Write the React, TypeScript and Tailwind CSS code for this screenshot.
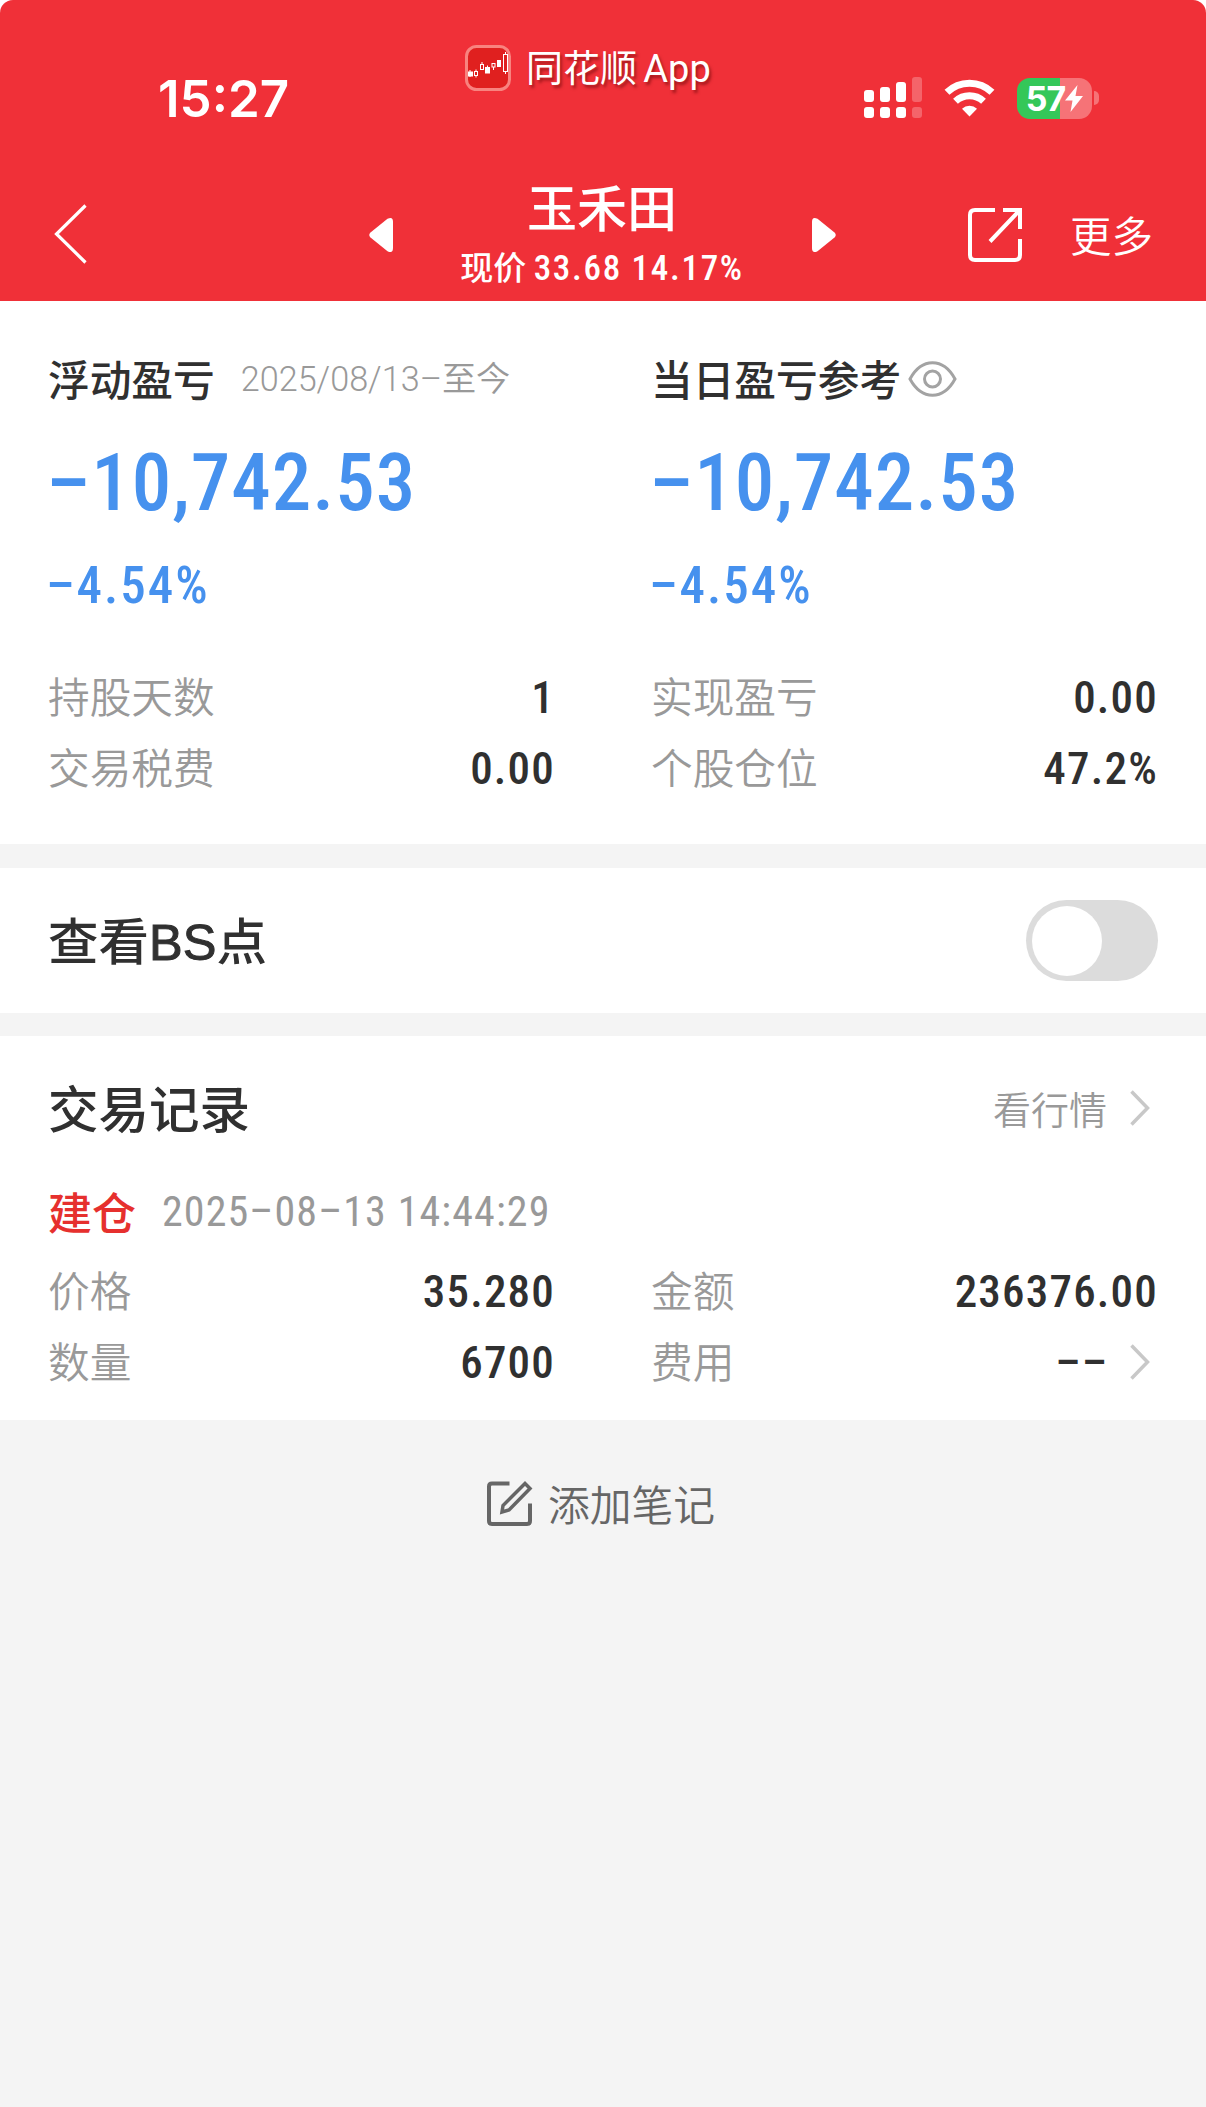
import type { ReactNode } from "react"

const DATE = "2025-08-13 14:44:29"

function ChevronRight() {
  return (
    <svg width="20" height="36" viewBox="0 0 20 36" fill="none" className="shrink-0">
      <path d="M1.5 1.5L17.5 18L1.5 34.5" stroke="#c8c8c8" strokeWidth="3.5" />
    </svg>
  )
}

function AppBadge() {
  return (
    <svg width="46" height="46" viewBox="0 0 46 46" fill="none">
      <rect x="1.5" y="1.5" width="43" height="43" rx="10" fill="#e0201f" stroke="#f8837f" strokeWidth="3" />
      <g fill="#fff" stroke="#fff" strokeWidth="1">
        <path d="M5 25v7" />
        <rect x="3.500" y="27" width="4" height="4" />
        <rect x="20.500" y="22.500" width="4" height="5.500" />
        <path d="M22.500 20.500v2" />
        <rect x="32.500" y="15.500" width="3" height="6" />
      </g>
      <g stroke="#fff" strokeWidth="1">
        <rect x="9.500" y="26.500" width="3" height="4" />
        <path d="M11 24.500v2M11 30.500v2" />
        <rect x="15.500" y="19.500" width="3" height="5" />
        <path d="M17 17v2.500" />
        <rect x="27" y="18.500" width="3" height="3.500" />
        <path d="M28.500 22v3" />
        <rect x="38.500" y="9.500" width="4" height="17" />
        <path d="M40.500 7v2.500M40.500 26.500v2.500" />
      </g>
    </svg>
  )
}

function Signal() {
  return (
    <svg width="58" height="42" viewBox="0 0 58 42" fill="#fff">
      <rect x="0" y="13" width="10" height="12" rx="3" />
      <rect x="16" y="10" width="10" height="15" rx="3" />
      <rect x="32" y="5" width="10" height="20" rx="3" />
      <rect x="48" y="0" width="10" height="25" rx="3" opacity="0.25" />
      <rect x="0" y="30" width="10" height="11" rx="3" />
      <rect x="16" y="30" width="10" height="11" rx="3" />
      <rect x="32" y="30" width="10" height="11" rx="3" />
      <rect x="48" y="30" width="10" height="11" rx="3" opacity="0.25" />
    </svg>
  )
}

function Wifi() {
  return (
    <svg width="51" height="38" viewBox="0 0 51 38" fill="none">
      <path d="M3 13.200A32.500 32.500 0 0 1 48 13.200" stroke="#fff" strokeWidth="7" />
      <path d="M11.500 22.300A20.500 20.500 0 0 1 39.500 22.300" stroke="#fff" strokeWidth="7" />
      <path d="M25.500 37.500L18 29.800A10.800 10.800 0 0 1 33 29.800Z" fill="#fff" />
    </svg>
  )
}

function Battery() {
  return (
    <div className="flex items-center gap-[2px]">
      <div className="flex h-[41px] w-[75px] items-center justify-center overflow-hidden rounded-[13px] bg-linear-to-r from-[#34c759] from-57% to-[#f67377] to-57%">
        <span className="font-['Inter',sans-serif] text-[34px] leading-[41px] font-bold tracking-[-1px] text-white">57</span>
        <svg width="18" height="27" viewBox="0 0 18 27" fill="#fff">
          <path d="M12.500 0L0 15.500H7.500L5.500 27L18 11H10.500Z" />
        </svg>
      </div>
      <div className="h-[14px] w-[5px] rounded-r-full bg-[#f67377]" />
    </div>
  )
}

function StatRow({ label, children }: { label: string; children: ReactNode }) {
  return (
    <div className="flex h-[71px] items-center justify-between">
      <span className="text-[41.700px] font-[350] text-[#999]">{label}</span>
      <span className="mt-[3px] flex items-center font-['Roboto',sans-serif] text-[45px] font-medium tracking-[1.200px] text-[#303030] [font-stretch:85%]">
        {children}
      </span>
    </div>
  )
}

function Profit({ title, extra }: { title: string; extra: ReactNode }) {
  return (
    <div>
      <div className="flex h-[60px] items-center">
        <h2 className="text-[41.700px] font-medium text-[#303030]">{title}</h2>
        {extra}
      </div>
      <p className="mt-[31px] -ml-[2px] h-[86px] font-['Roboto',sans-serif] text-[79px] leading-[86px] font-medium tracking-[1px] text-[#4691ee] [font-stretch:85%]">
        –10,742.53
      </p>
      <p className="mt-[30px] -ml-[2px] h-[60px] font-['Roboto',sans-serif] text-[51px] leading-[60px] font-medium tracking-[2px] text-[#4691ee] [font-stretch:85%]">
        –4.54%
      </p>
    </div>
  )
}

export default function App() {
  return (
    <div className="min-h-[2107px] w-[1206px] bg-[#f4f4f4] font-['Noto_Sans_CJK_SC',sans-serif] leading-none">
      <div className="bg-white">
        <header className="h-[301px] rounded-t-[13px] bg-[#f03038] text-white">
          {/* Status bar */}
          <div className="flex h-[140px] items-start pr-[107px] pl-[158px]">
            <div className="mt-[73px] w-[307px] font-['Inter',sans-serif] text-[51px] leading-[51px] font-semibold">15:27</div>
            <div className="mt-[44px] flex h-[47px] items-center gap-[15px]">
              <AppBadge />
              <span className="text-[37px] text-shadow-[2px_3px_3px_rgba(90,0,0,0.500)]">
                同花顺 <span className="-ml-[2px] font-['Roboto',sans-serif] text-[38px]">App</span>
              </span>
            </div>
            <div className="mt-[77px] ml-auto flex h-[42px] items-center gap-[22px]">
              <Signal />
              <Wifi />
              <Battery />
            </div>
          </div>

          {/* Navigation */}
          <div className="flex h-[161px] items-center pr-[53px] pl-[54px]">
            <svg width="34" height="60" viewBox="0 0 34 60" fill="none" className="mt-[26px]">
              <path d="M31.500 1.500L2.500 30L31.500 58.500" stroke="#fff" strokeWidth="3.200" />
            </svg>
            <svg width="26" height="36" viewBox="0 0 26 36" fill="#fff" className="mt-[29px] ml-[280px]">
              <path d="M19.500 1.800Q25 -1 25 5V31Q25 37 19.500 34.200L2.500 20.500Q0 18 2.500 15.500Z" />
            </svg>
            <div className="mt-[26px] ml-[66px] flex w-[284px] flex-col items-center">
              <h1 className="h-[64px] text-[50px] leading-[62px] font-medium">玉禾田</h1>
              <p className="h-[56px] text-[33px] leading-[56px] font-medium whitespace-nowrap">
                现价{" "}
                <span className="font-['Roboto',sans-serif] text-[35px] tracking-[1.700px] [font-stretch:85%]">
                  33.68 14.17%
                </span>
              </p>
            </div>
            <svg width="26" height="36" viewBox="0 0 26 36" fill="#fff" className="mt-[29px] ml-[67px]">
              <path d="M6.500 1.800Q1 -1 1 5V31Q1 37 6.500 34.200L23.500 20.500Q26 18 23.500 15.500Z" />
            </svg>
            <svg width="56" height="56" viewBox="0 0 56 56" fill="none" stroke="#fff" strokeWidth="4" className="mt-[29px] ml-[130px]">
              <path d="M28 3H8Q3 3 3 8V48Q3 53 8 53H48Q53 53 53 48V32" />
              <path d="M36 3H53V22M52 4L23 34.500" />
            </svg>
            <span className="mt-[29px] ml-auto text-[41.500px] font-[350]">更多</span>
          </div>
        </header>

        <section className="h-[543px] px-[48px] pt-[48px]">
          <div className="grid grid-cols-2 gap-x-[96px]">
            <Profit
              title="浮动盈亏"
              extra={
                <span className="ml-[26px] font-['Roboto','Noto_Sans_CJK_SC',sans-serif] text-[34.200px] font-[350] whitespace-nowrap text-[#999]">
                  2025/08/13–至今
                </span>
              }
            />
            <Profit
              title="当日盈亏参考"
              extra={
                <svg width="49" height="36" viewBox="0 0 49 36" fill="none" stroke="#a3a3a3" strokeWidth="3" className="ml-[7px]">
                  <path d="M2 18C8 7 16 1.800 24.500 1.800S41 7 47 18C41 29 33 34.200 24.500 34.200S8 29 2 18Z" />
                  <circle cx="24.500" cy="18" r="8" />
                </svg>
              }
            />
            <div className="mt-[44px]">
              <StatRow label="持股天数">1</StatRow>
              <StatRow label="交易税费">0.00</StatRow>
            </div>
            <div className="mt-[44px]">
              <StatRow label="实现盈亏">0.00</StatRow>
              <StatRow label="个股仓位">47.2%</StatRow>
            </div>
          </div>
        </section>
      </div>

      <section className="mt-[24px] flex h-[145px] items-center justify-between bg-white px-[48px]">
        <h2 className="text-[50.500px] font-medium text-[#303030]">
          查看<span className="font-['Liberation_Sans',sans-serif] [-webkit-text-stroke:1px_#303030]">BS</span>点
        </h2>
        <button className="flex h-[81px] w-[132px] items-center rounded-full bg-[#dcdcdc] px-[6px]">
          <span className="size-[70px] rounded-full bg-white" />
        </button>
      </section>

      <section className="mt-[23px] h-[384px] bg-white px-[48px] pt-[34px]">
        <div className="flex h-[72px] items-center justify-between">
          <h2 className="text-[50.500px] font-medium text-[#303030]">交易记录</h2>
          <div className="mt-[4px] flex items-center gap-[23px] pr-[8px]">
            <span className="text-[38px] font-[350] text-[#999]">看行情</span>
            <ChevronRight />
          </div>
        </div>
        <div className="mt-[37px] flex h-[64px] items-center gap-[26px]">
          <span className="text-[44px] font-medium text-[#e6302e]">建仓</span>
          <span className="mt-[2px] font-['Roboto',sans-serif] text-[42px] tracking-[1.100px] text-[#999] [font-stretch:85%]">
            {DATE.replaceAll("-", "–")}
          </span>
        </div>
        <div className="mt-[11px] grid grid-cols-2 gap-x-[96px]">
          <StatRow label="价格">35.280</StatRow>
          <StatRow label="金额">236376.00</StatRow>
          <StatRow label="数量">6700</StatRow>
          <StatRow label="费用">
            <span className="mr-[22px]">––</span>
            <span className="mr-[8px] flex">
              <ChevronRight />
            </span>
          </StatRow>
        </div>
      </section>

      <button className="mx-auto mt-[52px] flex h-[64px] items-center gap-[15px] pr-[5px] text-[#666]">
        <svg width="47" height="47" viewBox="0 0 47 47" fill="none" stroke="#666" strokeWidth="4" className="-mt-[2px]">
          <path d="M23.500 3.500H6Q3 3.500 3 6.500V41Q3 44 6 44H41Q44 44 44 41V23.500" />
          <path d="M39 3.500L44 8.500L23 30L16 32L17 25.500Z" strokeWidth="3.500" />
        </svg>
        <span className="text-[41.800px] font-[350]">添加笔记</span>
      </button>
    </div>
  )
}
